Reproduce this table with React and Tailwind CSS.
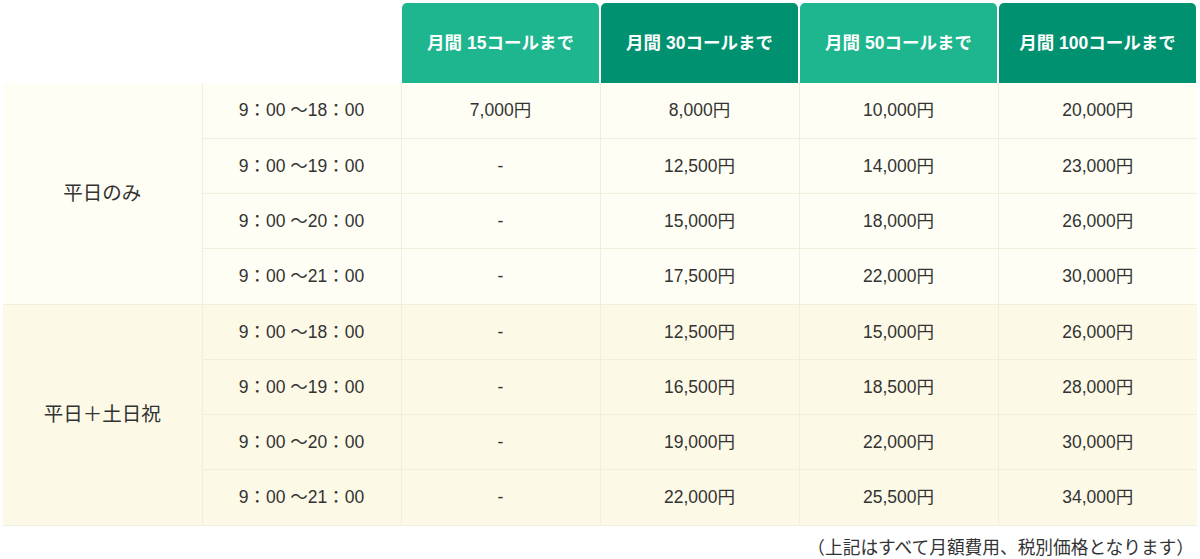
const plans = ["月間 15コールまで", "月間 30コールまで", "月間 50コールまで", "月間 100コールまで"];

const groups = [
  {
    label: "平日のみ",
    bg: "bg-[#fefef4]",
    rows: [
      ["9：00 ～18：00", "7,000円", "8,000円", "10,000円", "20,000円"],
      ["9：00 ～19：00", "-", "12,500円", "14,000円", "23,000円"],
      ["9：00 ～20：00", "-", "15,000円", "18,000円", "26,000円"],
      ["9：00 ～21：00", "-", "17,500円", "22,000円", "30,000円"],
    ],
  },
  {
    label: "平日＋土日祝",
    bg: "bg-[#fcf9e6]",
    rows: [
      ["9：00 ～18：00", "-", "12,500円", "15,000円", "26,000円"],
      ["9：00 ～19：00", "-", "16,500円", "18,500円", "28,000円"],
      ["9：00 ～20：00", "-", "19,000円", "22,000円", "30,000円"],
      ["9：00 ～21：00", "-", "22,000円", "25,500円", "34,000円"],
    ],
  },
];

export default function App() {
  return (
    <div
      className="w-[1200px] h-[559px] bg-white text-[#333] pt-[3px] px-[3px]"
      style={{ fontFamily: '"Liberation Sans", "Noto Sans CJK JP", sans-serif' }}
    >
      <table className="w-[1194px] table-fixed border-collapse text-[17.5px]">
        <thead>
          <tr className="h-[80px]">
            <th className="w-[199px]"></th>
            <th className="w-[199px]"></th>
            {plans.map((p, i) => (
              <th key={p} className="w-[199px] p-0 align-top">
                <div
                  className={
                    "h-[80px] ml-[1px] mr-[1px] rounded-t-[5px] flex items-center justify-center text-white font-bold text-[17.5px] " +
                    (i % 2 === 0 ? "bg-[#1db68e]" : "bg-[#009270]")
                  }
                >
                  {p}
                </div>
              </th>
            ))}
          </tr>
        </thead>
        <tbody>
          {groups.map((g) =>
            g.rows.map((r, ri) => (
              <tr key={g.label + ri} className={"h-[55.25px] " + g.bg}>
                {ri === 0 && (
                  <td
                    rowSpan={4}
                    className="text-center text-[19.5px] border-r border-b border-[#f1efdc]"
                  >
                    {g.label}
                  </td>
                )}
                {r.map((c, ci) => (
                  <td
                    key={ci}
                    className="text-center border-r border-b border-[#f1efdc] last:border-r-0"
                  >
                    {c}
                  </td>
                ))}
              </tr>
            ))
          )}
        </tbody>
      </table>
      <p className="text-right pr-[3px] mt-[9px] text-[17.7px]">
        （上記はすべて月額費用、税別価格となります）
      </p>
    </div>
  );
}
